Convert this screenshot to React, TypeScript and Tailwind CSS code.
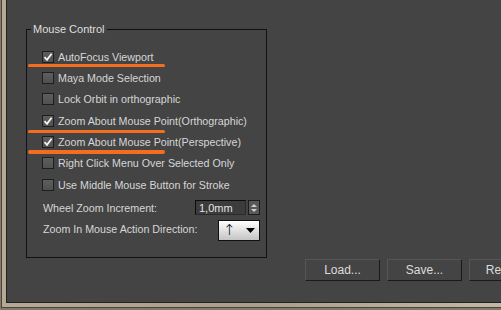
import React from "react";

const options = [
  { label: "AutoFocus Viewport", checked: true, mark: "bottom-[0px]" },
  { label: "Maya Mode Selection", checked: false },
  { label: "Lock Orbit in orthographic", checked: false },
  { label: "Zoom About Mouse Point(Orthographic)", checked: true, mark: "bottom-[-2px]" },
  { label: "Zoom About Mouse Point(Perspective)", checked: true, mark: "bottom-[-1px]" },
  { label: "Right Click Menu Over Selected Only", checked: false },
  { label: "Use Middle Mouse Button for Stroke", checked: false },
];

function CheckBox({ checked }: { checked: boolean }) {
  return (
    <span className="flex h-[12px] w-[12px] shrink-0 items-center justify-center border border-[#1e1e1e] bg-gradient-to-b from-[#5e5e5e] to-[#505050]">
      {checked && (
        <svg width="10" height="10" viewBox="0 0 10 10">
          <path d="M1.5 5.2 L4 7.8 L8.6 1.8" stroke="#f4f4f4" strokeWidth="1.8" fill="none" />
        </svg>
      )}
    </span>
  );
}

export default function App() {
  return (
    <div className="h-[310px] w-[501px] overflow-hidden bg-[#857a68] pb-[2px] pl-px font-['Liberation_Sans',Arial,sans-serif] text-[10.7px] text-[#d6d6d6]">
      <div className="h-full bg-[#4a443c] pb-px pl-px">
        <div className="h-full bg-gradient-to-r from-[#b4a994] via-[#a89e8c] to-[#c2b8a6] pb-[4px] pl-[4px]">
          <div className="h-full border-b border-l border-[#222] bg-[#444444] pl-[19px] pt-[22px]">
            <fieldset className="h-[236px] w-[241px] border border-[#111]">
              <legend className="ml-[4px] px-[2px] text-[11px] leading-[14px] text-[#dedede]">Mouse Control</legend>
              <div className="flex flex-col pt-[10px]">
                {options.map((o) => (
                  <div key={o.label} className="relative flex h-[21.33px] items-center gap-[4px] pl-[15px]">
                    <CheckBox checked={o.checked} />
                    <span>{o.label}</span>
                    {o.mark && (
                      <span className={`absolute left-[1px] h-[3.5px] w-[137px] rounded-full bg-[#f36f1f] ${o.mark}`} />
                    )}
                  </div>
                ))}
                <div className="mt-[5px] flex h-[15px] items-center justify-between pl-[16px] pr-[6px]">
                  <span>Wheel Zoom Increment:</span>
                  <div className="flex h-[15px] items-stretch gap-[2px]">
                    <div className="flex w-[51px] items-center border border-[#0c0c0c] border-b-[#2a2a2a] border-r-[#2a2a2a] bg-[#3c3c3c] pl-[3px] text-[11px] text-[#e4e4e4]">
                      1,0mm
                    </div>
                    <div className="flex w-[12px] flex-col items-center justify-center gap-[2px] border border-[#1c1c1c] bg-[#585858]">
                      <svg width="6" height="3" viewBox="0 0 6 3">
                        <path d="M0 3 L3 0 L6 3 Z" fill="#cfcfcf" />
                      </svg>
                      <svg width="6" height="3" viewBox="0 0 6 3">
                        <path d="M0 0 L6 0 L3 3 Z" fill="#cfcfcf" />
                      </svg>
                    </div>
                  </div>
                </div>
                <div className="mt-[5px] flex h-[21px] items-center justify-between pl-[16px] pr-[6px]">
                  <span className="-mt-[4px]">Zoom In Mouse Action Direction:</span>
                  <div className="flex h-[21px] w-[42px] items-center justify-between border border-[#111] bg-gradient-to-b from-[#ffffff] to-[#c4c4c4] pl-[4px] pr-[4px] text-[#000]">
                    <span className="font-['DejaVu_Sans',sans-serif] text-[15px] font-light leading-none">↑</span>
                    <svg width="9" height="5" viewBox="0 0 9 5">
                      <path d="M0 0 L9 0 L4.5 5 Z" fill="#000" />
                    </svg>
                  </div>
                </div>
              </div>
            </fieldset>
            <div className="ml-[279px] mt-px flex gap-[7px]">
              {["Load...", "Save...", "Reset..."].map((b) => (
                <button
                  key={b}
                  className="flex h-[22px] w-[75px] shrink-0 items-center justify-center border border-[#565656] border-b-[#1a1a1a] border-r-[#1a1a1a] bg-[#444444] text-[12px] text-[#dcdcdc]"
                >
                  {b}
                </button>
              ))}
            </div>
          </div>
        </div>
      </div>
    </div>
  );
}
